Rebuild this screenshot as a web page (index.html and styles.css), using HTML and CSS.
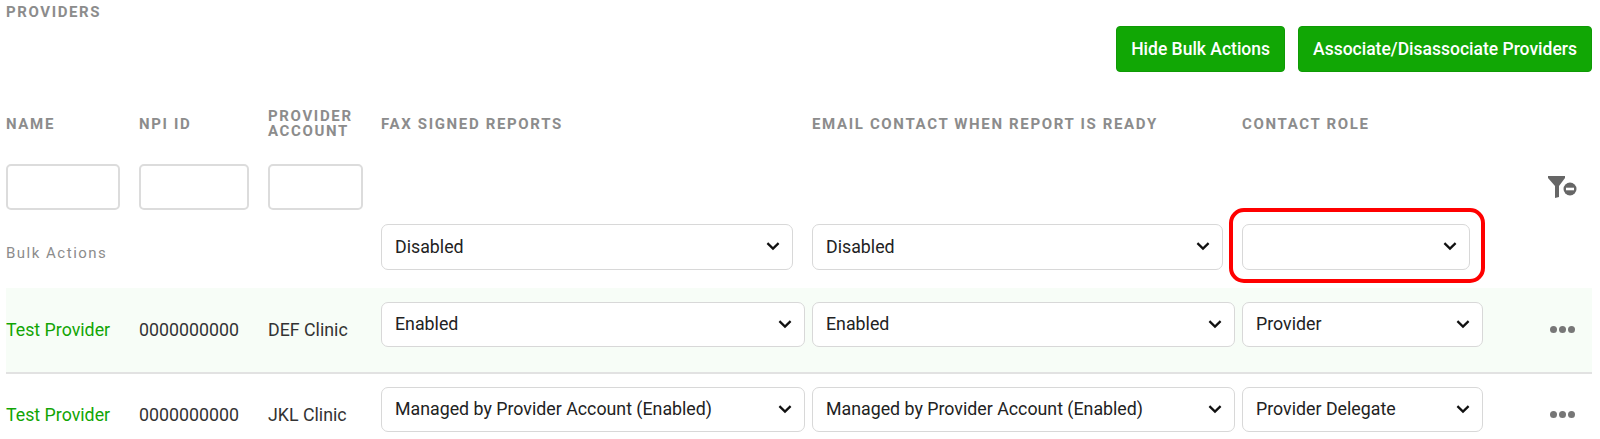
FILE: index.html
```html
<!DOCTYPE html>
<html lang="en">
  <head>
    <meta charset="UTF-8" />
    <title>Providers</title>
    <link rel="stylesheet" href="styles.css">
  </head>
  <body>
    <svg class="defs" width="0" height="0">
      <symbol id="chevron" viewBox="0 0 14 10">
        <path d="M1.4 2.2 L7 7.6 L12.6 2.2" fill="none" stroke="#111" stroke-width="2.3" />
      </symbol>
    </svg>
    <div class="providers">
      <div class="title">PROVIDERS</div>
      <div class="actions">
        <button class="btn">Hide Bulk Actions</button>
        <button class="btn">Associate/Disassociate Providers</button>
      </div>

      <div class="row head">
        <div>NAME</div>
        <div>NPI ID</div>
        <div class="two-line">PROVIDER ACCOUNT</div>
        <div>FAX SIGNED REPORTS</div>
        <div>EMAIL CONTACT WHEN REPORT IS READY</div>
        <div>CONTACT ROLE</div>
      </div>

      <div class="row filters">
        <input class="filter name" type="text" />
        <input class="filter npi" type="text" />
        <input class="filter account" type="text" />
        <div></div>
        <div></div>
        <div></div>
        <svg class="clear-filter" width="30" height="24" viewBox="0 0 30 24">
          <path d="M0 1 H17 V3 L11 11 V22 L7 23 V11 L0 3 Z" fill="#666" />
          <circle cx="22" cy="14" r="6.5" fill="#666" />
          <rect x="18" y="12.7" width="8" height="2.6" fill="#fff" />
        </svg>
      </div>

      <div class="row bulk">
        <div class="bulk-label">Bulk Actions</div>
        <div></div>
        <div></div>
        <div class="select fax-bulk"><span>Disabled</span><svg><use href="#chevron" /></svg></div>
        <div class="select email-bulk"><span>Disabled</span><svg><use href="#chevron" /></svg></div>
        <div class="role-bulk-cell">
          <div class="select role-bulk"><span></span><svg><use href="#chevron" /></svg></div>
          <div class="highlight"></div>
        </div>
      </div>

      <div class="row provider selected">
        <a class="link">Test Provider</a>
        <div class="cell">0000000000</div>
        <div class="cell">DEF Clinic</div>
        <div class="select fax"><span>Enabled</span><svg><use href="#chevron" /></svg></div>
        <div class="select email"><span>Enabled</span><svg><use href="#chevron" /></svg></div>
        <div class="select role"><span>Provider</span><svg><use href="#chevron" /></svg></div>
        <div class="more"><i></i><i></i><i></i></div>
      </div>

      <div class="row provider">
        <a class="link">Test Provider</a>
        <div class="cell">0000000000</div>
        <div class="cell">JKL Clinic</div>
        <div class="select fax"><span>Managed by Provider Account (Enabled)</span><svg><use href="#chevron" /></svg></div>
        <div class="select email"><span>Managed by Provider Account (Enabled)</span><svg><use href="#chevron" /></svg></div>
        <div class="select role"><span>Provider Delegate</span><svg><use href="#chevron" /></svg></div>
        <div class="more"><i></i><i></i><i></i></div>
      </div>
    </div>
  </body>
</html>
```

FILE: styles.css
```css
html,
body {
  padding: 0;
  margin: 0;
  height: 100%;
  overflow: hidden;
  background-color: #fff;
  font-family: Roboto, "Liberation Sans", sans-serif;
}

.defs {
  position: absolute;
}

.providers {
  padding: 0 8px 0 6px;
}

.title {
  height: 26px;
  line-height: 24px;
  font-size: 15px;
  font-weight: 700;
  letter-spacing: 1.6px;
  color: #8c8c8c;
}

.actions {
  display: flex;
  justify-content: flex-end;
  gap: 13px;
  height: 46px;
}

.btn {
  padding: 0 14px;
  border: 1px solid #0f9a05;
  border-radius: 4px;
  background-color: #11a705;
  color: #fff;
  font-family: inherit;
  font-size: 17.5px;
  font-weight: 500;
}

.row {
  display: grid;
  grid-template-columns: 133px 129px 113px 431px 430px 306px 44px;
}

.head {
  align-items: center;
  height: 64px;
  margin-top: 20px;
  font-size: 15px;
  font-weight: 700;
  letter-spacing: 1.65px;
  line-height: 15px;
  color: #8c8c8c;
}

.two-line {
  width: 95px;
}

.filters {
  height: 46px;
  margin-top: 8px;
}

.filter {
  box-sizing: border-box;
  height: 46px;
  border: 2px solid #dcdcdc;
  border-radius: 5px;
  background-color: #fff;
}

.filter.name {
  width: 114px;
}

.filter.npi {
  width: 110px;
}

.filter.account {
  width: 95px;
}

.clear-filter {
  margin-top: 11px;
}

.bulk {
  align-items: center;
  height: 46px;
  margin-top: 14px;
}

.bulk-label {
  font-size: 15px;
  letter-spacing: 1.5px;
  color: #8c8c8c;
  white-space: nowrap;
  padding-top: 11px;
}

.select {
  box-sizing: border-box;
  display: flex;
  align-items: center;
  justify-content: space-between;
  height: 46px;
  padding: 0 12px 2px 13px;
  border: 1.5px solid #d8d8d8;
  border-radius: 7px;
  background-color: #fff;
  font-size: 17.8px;
  color: #222;
}

.select svg {
  width: 14px;
  height: 10px;
  flex: none;
}

.fax-bulk {
  width: 412px;
}

.email-bulk {
  width: 411px;
}

.role-bulk-cell {
  position: relative;
}

.role-bulk {
  width: 228px;
}

.highlight {
  position: absolute;
  top: -16px;
  left: -13px;
  width: 256px;
  height: 75px;
  box-sizing: border-box;
  border: 4px solid #f00;
  border-radius: 15px;
}

.provider {
  align-items: start;
  height: 65px;
  padding-top: 13px;
  box-sizing: border-box;
  font-size: 17.8px;
  color: #333;
}

.provider.selected {
  height: 86px;
  margin-top: 18px;
  padding-top: 14px;
  border-bottom: 2px solid #e2e2e2;
  background-color: #f7fdf7;
}

.link {
  color: #12a505;
}

.link,
.cell {
  padding-top: 17px;
}

.select.fax {
  width: 424px;
}

.select.email {
  width: 423px;
}

.select.role {
  width: 241px;
}

.provider .select {
  height: 45px;
}

.more {
  display: flex;
  gap: 2px;
  padding-top: 24px;
  margin-left: 2px;
}

.more i {
  width: 7px;
  height: 7px;
  border-radius: 50%;
  background-color: #777;
}
```
